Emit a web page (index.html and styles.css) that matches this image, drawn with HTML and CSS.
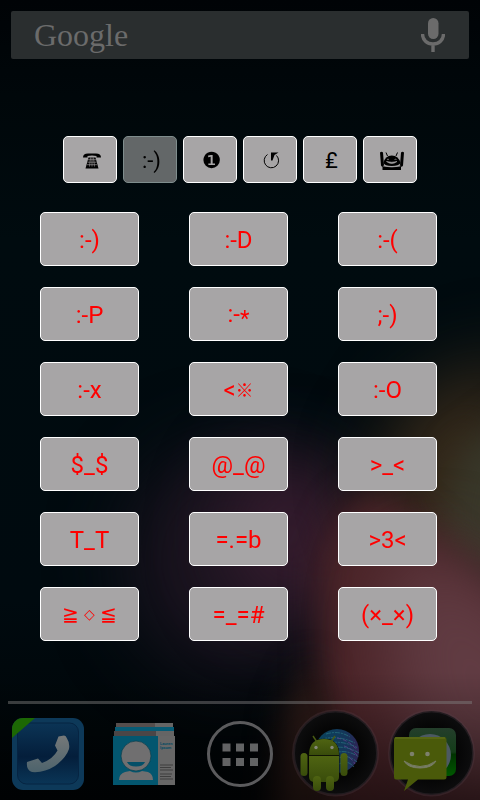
FILE: index.html
```html
<!DOCTYPE html>
<html lang="en">
<head>
<meta charset="utf-8">
<meta name="viewport" content="width=device-width, initial-scale=1">
<title>Emoticons</title>
<link rel="stylesheet" href="styles.css">
</head>
<body>
<svg class="wallpaper" viewBox="0 0 480 800" preserveAspectRatio="none" aria-hidden="true">
  <defs>
    <filter id="soft" x="-80%" y="-80%" width="260%" height="260%" color-interpolation-filters="sRGB"><feGaussianBlur stdDeviation="36"/></filter>
    <filter id="mid" x="-50%" y="-50%" width="200%" height="200%" color-interpolation-filters="sRGB"><feGaussianBlur stdDeviation="17"/></filter>
    <linearGradient id="base" x2="0" y2="1"><stop offset="0" stop-color="#000306"/><stop offset=".12" stop-color="#00070a"/><stop offset=".3" stop-color="#000b0f"/><stop offset=".75" stop-color="#000a0f"/><stop offset="1" stop-color="#000406"/></linearGradient>
    <linearGradient id="shade" x2="0" y2="1"><stop offset=".84" stop-opacity="0"/><stop offset="1" stop-opacity=".5"/></linearGradient>
  </defs>
  <rect width="480" height="800" fill="url(#base)"/>
  <ellipse cx="235" cy="560" rx="110" ry="115" fill="#19131e" filter="url(#soft)"/>
  <ellipse cx="290" cy="535" rx="65" ry="80" fill="#351c2e" filter="url(#soft)"/>
  <path d="M520 350L420 390L370 470L400 560L520 600Z" fill="#35291a" filter="url(#soft)"/>
  <path d="M530 400L460 450L440 530L530 610Z" fill="#383729" filter="url(#mid)"/>
  <path d="M310 860L318 690L318 560L345 505L385 488L430 530L560 640V860Z" fill="#4a2327" filter="url(#mid)"/>
  <path d="M270 860L285 710L310 660L330 720V860Z" fill="#301c18" filter="url(#mid)"/>
  <path d="M400 560L440 545L560 640V800L420 770L380 640Z" fill="#613c43" filter="url(#soft)"/>
  <rect width="480" height="800" fill="url(#shade)"/>
</svg>

<div class="screen">
  <header class="search">
    <a class="logo" href="#search">Google</a>
    <button class="voice" aria-label="Voice search">
      <svg viewBox="0 0 24 34"><rect x="7" y="0" width="10.500" height="21" rx="5.200" fill="#6b6b6b"/><path d="M1.500 16c0 6 4.500 10 10.500 10s10.500-4 10.500-10M12 26v8" fill="none" stroke="#6b6b6b" stroke-width="3.400"/></svg>
    </button>
  </header>

  <main>
    <nav class="tabs" aria-label="Symbol groups">
      <button class="tab" aria-label="Symbols">
        <svg class="glyph" viewBox="0 0 20 18"><path d="M1 5.500Q1 1.500 6 1.500H14Q19 1.500 19 5.500H14.500V4Q10 3 5.500 4V5.500Z"/><path d="M6.500 5.500H13.500L16.500 16.500H3.500Z"/><path d="M6 7.700H14M5.500 10.200H14.500M5 12.700H15M8.500 5.500L7.500 14.500M11.500 5.500L12.500 14.500M10 5.500V14.500" stroke="#a7a5a6" stroke-width=".6"/></svg>
      </button>
      <button class="tab on">:-)</button>
      <button class="tab dingbat">❶</button>
      <button class="tab" aria-label="Arrows">
        <svg class="glyph" viewBox="0 0 20 18"><path d="M5.500 2.500A7.200 7.200 0 1 0 14.500 3.500" fill="none" stroke="#000" stroke-width="1"/><path d="M9 .5H16.500L12.500 3L10.500 8.500H9Z"/></svg>
      </button>
      <button class="tab">₤</button>
      <button class="tab" aria-label="Faces">
        <svg class="face" viewBox="0 0 26 20"><path d="M1 1.500Q2.500 0 4 1.500L5 14.500Q3.500 17 2 14.500ZM25 1.500Q23.500 0 22 1.500L21 14.500Q22.500 17 24 14.500Z"/><path d="M7 1.500L8.500 5M18.500 1.500L17 5" fill="none" stroke="#000" stroke-width="1"/><path d="M4.500 12Q6 4.500 12.800 4.500T21.500 12Q20 15 12.800 15T4.500 12Z"/><path d="M3.500 14.500Q12.800 17 22 14.500V19H3.500Z"/><path d="M8 8.500Q9 7.800 10 8.500M15.500 8.500Q16.500 7.800 17.500 8.500M7.500 10.500Q12.800 14.500 18 10.500Q12.800 12 7.500 10.500ZM4 15Q12.800 17 21.500 15" fill="#a7a5a6" stroke="#a7a5a6" stroke-width=".6"/></svg>
      </button>
    </nav>

    <section class="grid" aria-label="Emoticons">
      <button class="key">:-)</button><button class="key">:-D</button><button class="key">:-(</button>
      <button class="key">:-P</button><button class="key">:-<span class="star">*</span></button><button class="key">;-)</button>
      <button class="key">:-x</button><button class="key">&lt;<span class="mark">※</span></button><button class="key">:-O</button>
      <button class="key">$_$</button><button class="key">@_@</button><button class="key">&gt;_&lt;</button>
      <button class="key">T_T</button><button class="key">=.=b</button><button class="key">&gt;3&lt;</button>
      <button class="key math"><span>≧</span><span class="gem">◇</span><span>≦</span></button><button class="key">=_=#</button><button class="key">(×_×)</button>
    </section>
  </main>

  <footer class="dock">
    <a href="#phone" aria-label="Phone">
      <svg viewBox="0 0 96 96"><defs><linearGradient id="ph" x2="0" y2="1"><stop offset="0" stop-color="#0b3455"/><stop offset=".55" stop-color="#041e3b"/><stop offset="1" stop-color="#0a3556"/></linearGradient><linearGradient id="hs" x2="0" y2="1"><stop offset="0" stop-color="#757879"/><stop offset="1" stop-color="#4d636c"/></linearGradient><clipPath id="pc"><rect x="12" y="14" width="72" height="72" rx="11"/></clipPath></defs>
        <rect x="12" y="14" width="72" height="72" rx="11" fill="#0d3959"/><rect x="17.500" y="19" width="61" height="61" rx="9" fill="url(#ph)" stroke="#062442"/>
        <path d="M12 14H35L12 34Z" fill="#1c6804" clip-path="url(#pc)"/>
        <path d="M58.500 32.500L64 31.500Q66 31.500 67 34.500Q70 39 69 45Q66 54 55 62Q44 69 32 68Q26 66 27 58L38 54.500L42 59Q53 55 57.500 46.500L55 41.500Z" fill="url(#hs)"/></svg>
    </a>
    <a href="#people" aria-label="People">
      <svg viewBox="0 0 96 96"><path d="M20 19H77V32H20Z" fill="#656565"/><path d="M20 19H59V23H20Z" fill="#554e4d"/><path d="M19 23H78V27H19Z" fill="#075b75"/><path d="M18 27H78V33H18Z" fill="#4b4647"/><path d="M60 27H78V33H60Z" fill="#656565"/>
        <rect x="17" y="32" width="45" height="49" fill="#03566f"/><rect x="62" y="32" width="17" height="49" fill="#676767"/>
        <circle cx="40" cy="52" r="15" fill="#706f70" stroke="#073d4e" stroke-width=".7"/><path d="M31 58H49Q47 62.500 40 62.500T31 58Z" fill="#034f68"/><path d="M23 76Q23 70 29 68L34 67Q40 70 46 67L52 68Q57 70 57 76Z" fill="#706f70"/>
        <g fill="#074b63" font-family="Roboto" font-weight="700" font-size="4"><text x="64" y="41">Lauren</text><text x="64" y="45">Ipsum</text></g>
        <path d="M64 61H77M64 63.500H75M64 66H77M64 70H76M64 72.500H75M64 75H77" stroke="#3f3f3f"/></svg>
    </a>
    <a href="#apps" aria-label="All apps">
      <svg viewBox="0 0 96 96"><circle cx="48" cy="50" r="31.500" fill="none" stroke="#5b5b5d" stroke-width="3"/><path d="M30.500 39.500h8v8h-8zM44 39.500h8v8h-8zM58 39.500h8v8h-8zM30.500 54h8v8h-8zM44 54h8v8h-8zM58 54h8v8h-8z" fill="#626364"/></svg>
    </a>
    <a href="#android" aria-label="Developer folder">
      <svg viewBox="0 0 96 96"><defs><radialGradient id="bk"><stop offset=".6" stop-color="#050505"/><stop offset="1" stop-color="#0d0d0e"/></radialGradient><linearGradient id="gl"><stop offset="0" stop-color="#08435b"/><stop offset=".7" stop-color="#15365a"/><stop offset="1" stop-color="#2f2355"/></linearGradient><linearGradient id="an" x2="0" y2="1"><stop offset="0" stop-color="#4f6412"/><stop offset="1" stop-color="#394c0b"/></linearGradient></defs>
        <circle cx="47.500" cy="49" r="42" fill="url(#bk)" stroke="#54404a" stroke-opacity=".3" stroke-width="3"/>
        <g transform="translate(1 -5)"><circle cx="48" cy="52" r="22" fill="url(#gl)"/><path d="M37 35Q50 31 61 38M33 40Q50 36 66 44M34 45Q52 40 69 49M40 50Q55 45 70 54M44 55Q56 49 70 58M48 60Q58 54 68 63M50 65Q58 60 65 68" fill="none" stroke="#297681" stroke-dasharray="5 1 2 1" stroke-width=".7"/><path d="M48 39Q60 41 68 51M55 47Q64 50 69 58M55 56Q63 59 66 65" fill="none" stroke="#61418b" stroke-dasharray="4 2" stroke-width=".8"/></g>
        <g transform="translate(-1 -4)"><path d="M22 55Q22 39 37 39T52 55V77Q52 82 46 82H28Q22 82 22 77Z" fill="#080b03" stroke="#080b03"/><g fill="url(#an)"><path d="M22 55Q22 39 37 39T52 55Z"/><path d="M22 56H52V77Q52 82 46 82H28Q22 82 22 77Z"/><rect x="13.500" y="53" width="7" height="23" rx="3.500"/><rect x="53.500" y="53" width="7" height="23" rx="3.500"/><rect x="26" y="76" width="8" height="15" rx="4"/><rect x="39" y="76" width="8" height="15" rx="4"/></g><path d="M26 36L30 42M48 36L44 42" stroke="#475a12" stroke-width="1.500"/><path d="M22 55.500H52" stroke="#101504"/><circle cx="29" cy="47.500" r="1.700" fill="#85877a"/><circle cx="45" cy="47.500" r="1.700" fill="#85877a"/></g></svg>
    </a>
    <a href="#messages" aria-label="Messaging folder">
      <svg viewBox="0 0 96 96"><defs><linearGradient id="gr" x2="0" y2="1"><stop offset="0" stop-color="#243e2b"/><stop offset=".5" stop-color="#143c19"/><stop offset=".55" stop-color="#003300"/><stop offset="1" stop-color="#005800"/></linearGradient></defs>
        <circle cx="47.500" cy="49" r="42" fill="url(#bk)" stroke="#54404a" stroke-opacity=".3" stroke-width="3"/>
        <rect x="25" y="24" width="47" height="48" rx="7" fill="url(#gr)"/><ellipse cx="46" cy="51" rx="21" ry="21" fill="#4c5962"/>
        <path d="M12 33H60Q62.500 33 62.500 36V73Q62.500 75.500 60 75.500H34L20 87L24 75.500H12Q10 75.500 10 73V36Q10 33 12 33Z" fill="#4a5a0a"/><path d="M11 34H61" stroke="#65721f"/><path d="M20 57Q36 68 52 57Q48 64 36 64T20 57Z" fill="#777c65" stroke="#777c65"/><circle cx="28" cy="50" r="2.300" fill="#7d806d"/><circle cx="43.500" cy="50" r="2.300" fill="#7d806d"/></svg>
    </a>
  </footer>
</div>
</body>
</html>
```
FILE: styles.css
```css
* { box-sizing: border-box; }
body {
  margin: 0;
  background: #000a0e;
  font-family: Roboto, "Noto Sans CJK JP", "DejaVu Sans", sans-serif;
}
.wallpaper {
  position: fixed;
  inset: 0;
  width: 100%;
  height: 100%;
  z-index: -1;
}
.screen {
  min-height: 100vh;
  display: flex;
  flex-direction: column;
}
button {
  font: inherit;
  padding: 0;
  border: 0;
  background: none;
}
.search {
  display: flex;
  align-items: center;
  justify-content: space-between;
  height: 48px;
  margin: 11px 11px 0;
  padding: 0 24px 0 23px;
  border-radius: 2px;
  background: #2a2e2f;
}
.logo {
  color: #6b6b6b;
  font: 32px/48px "Liberation Serif", serif;
  text-decoration: none;
}
.voice svg {
  display: block;
  width: 24px;
  height: 34px;
}
main { flex: 1; }
.tabs {
  display: flex;
  justify-content: center;
  gap: 6px;
  margin-top: 77px;
}
.tab {
  display: flex;
  align-items: center;
  justify-content: center;
  width: 54px;
  height: 47px;
  padding: 2px 0 0 3px;
  border: 1px solid #fff;
  border-radius: 5px;
  background: #a7a5a6;
  color: #000;
  font-size: 22px;
}
.dingbat {
  font-family: "DejaVu Sans", sans-serif;
}
.tab.on {
  background: #636768;
  border-color: #7f8d8d;
}
.glyph {
  width: 20px;
  height: 18px;
}
.face {
  width: 26px;
  height: 20px;
}
.grid {
  display: grid;
  grid-template-columns: repeat(3, 1fr);
  gap: 21px 50px;
  margin: 29px 43px 0 40px;
}
.key {
  height: 54px;
  padding-top: 2px;
  border: 1px solid #fff;
  border-radius: 5px;
  background: #a7a5a6;
  color: #f00;
  font-size: 24px;
  line-height: 28px;
  white-space: nowrap;
}
.star {
  font-size: 22px;
  line-height: 1;
  vertical-align: -4px;
}
.mark {
  font-size: 18px;
  line-height: 1;
  vertical-align: 1px;
}
.math {
  display: flex;
  align-items: center;
  justify-content: center;
  gap: 5px;
  padding: 0;
  font-family: "DejaVu Sans", sans-serif;
  font-weight: 200;
}
.math span { font-size: 20px; }
.math .gem { font-size: 14px; }
.dock {
  display: grid;
  grid-template-columns: repeat(5, 1fr);
  justify-items: center;
  position: relative;
  padding-top: 3px;
}
.dock::before {
  content: "";
  position: absolute;
  inset: 0 8px auto;
  height: 3px;
  background: rgb(128 128 128 / 45%);
}
.dock a, .dock svg { display: block; }
.dock svg {
  width: 96px;
  height: 96px;
}
```
